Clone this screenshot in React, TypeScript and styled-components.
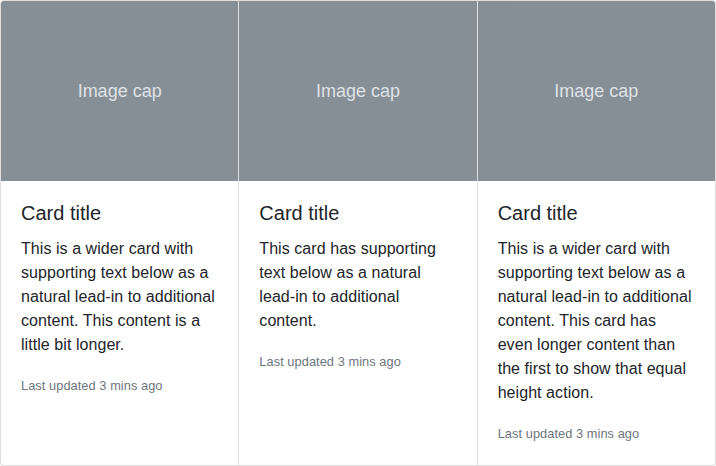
import React from "react";
import styled, { createGlobalStyle } from "styled-components";

const GlobalStyle = createGlobalStyle`
     *, *::before, *::after { box-sizing: border-box; }
     body {
          margin: 0;
          font-family: "Liberation Sans", Arial, Helvetica, sans-serif;
          font-size: 16px;
          line-height: 1.5;
          color: #212529;
          background: #fff;
     }
`

const CardGroup = styled.div`
     display: flex;
     width: 716px;
`

const Card = styled.div`
     flex: 1 0 0%;
     min-width: 0;
     display: flex;
     flex-direction: column;
     background: #fff;
     border: 1px solid rgba(0, 0, 0, 0.125);
     & + & {
          border-left: 0;
     }
     &:first-child {
          border-radius: 4px 0 0 4px;
     }
     &:last-child {
          border-radius: 0 4px 4px 0;
     }
`

const ImageCap = styled.div<{ $first?: boolean; $last?: boolean }>`
     height: 180px;
     background: #868e96;
     color: #dee2e6;
     font-size: 18px;
     display: flex;
     align-items: center;
     justify-content: center;
     border-top-left-radius: ${(p) => (p.$first ? "3px" : "0")};
     border-top-right-radius: ${(p) => (p.$last ? "3px" : "0")};
`

const CardBody = styled.div`
     flex: 1 1 auto;
     padding: 20px;
`

const CardTitle = styled.h5`
     margin: 0 0 12px;
     font-size: 20px;
     font-weight: 400;
     line-height: 1.2;
`

const CardText = styled.p`
     margin: 0 0 16px;
     letter-spacing: 0.06px;
     &:last-child {
          margin-bottom: 0;
     }
`

const Muted = styled.small`
     font-size: 80%;
     color: #6c757d;
`

const cards = [
     "This is a wider card with supporting text below as a natural lead-in to additional content. This content is a little bit longer.",
     "This card has supporting text below as a natural lead-in to additional content.",
     "This is a wider card with supporting text below as a natural lead-in to additional content. This card has even longer content than the first to show that equal height action.",
]

export default function App() {
     return (
          <>
               <GlobalStyle />
               <CardGroup>
                    {cards.map((text, i) => (
                         <Card key={i}>
                              <ImageCap $first={i === 0} $last={i === cards.length - 1}>
                                   Image cap
                              </ImageCap>
                              <CardBody>
                                   <CardTitle>Card title</CardTitle>
                                   <CardText>{text}</CardText>
                                   <CardText>
                                        <Muted>Last updated 3 mins ago</Muted>
                                   </CardText>
                              </CardBody>
                         </Card>
                    ))}
               </CardGroup>
          </>
     )
}
